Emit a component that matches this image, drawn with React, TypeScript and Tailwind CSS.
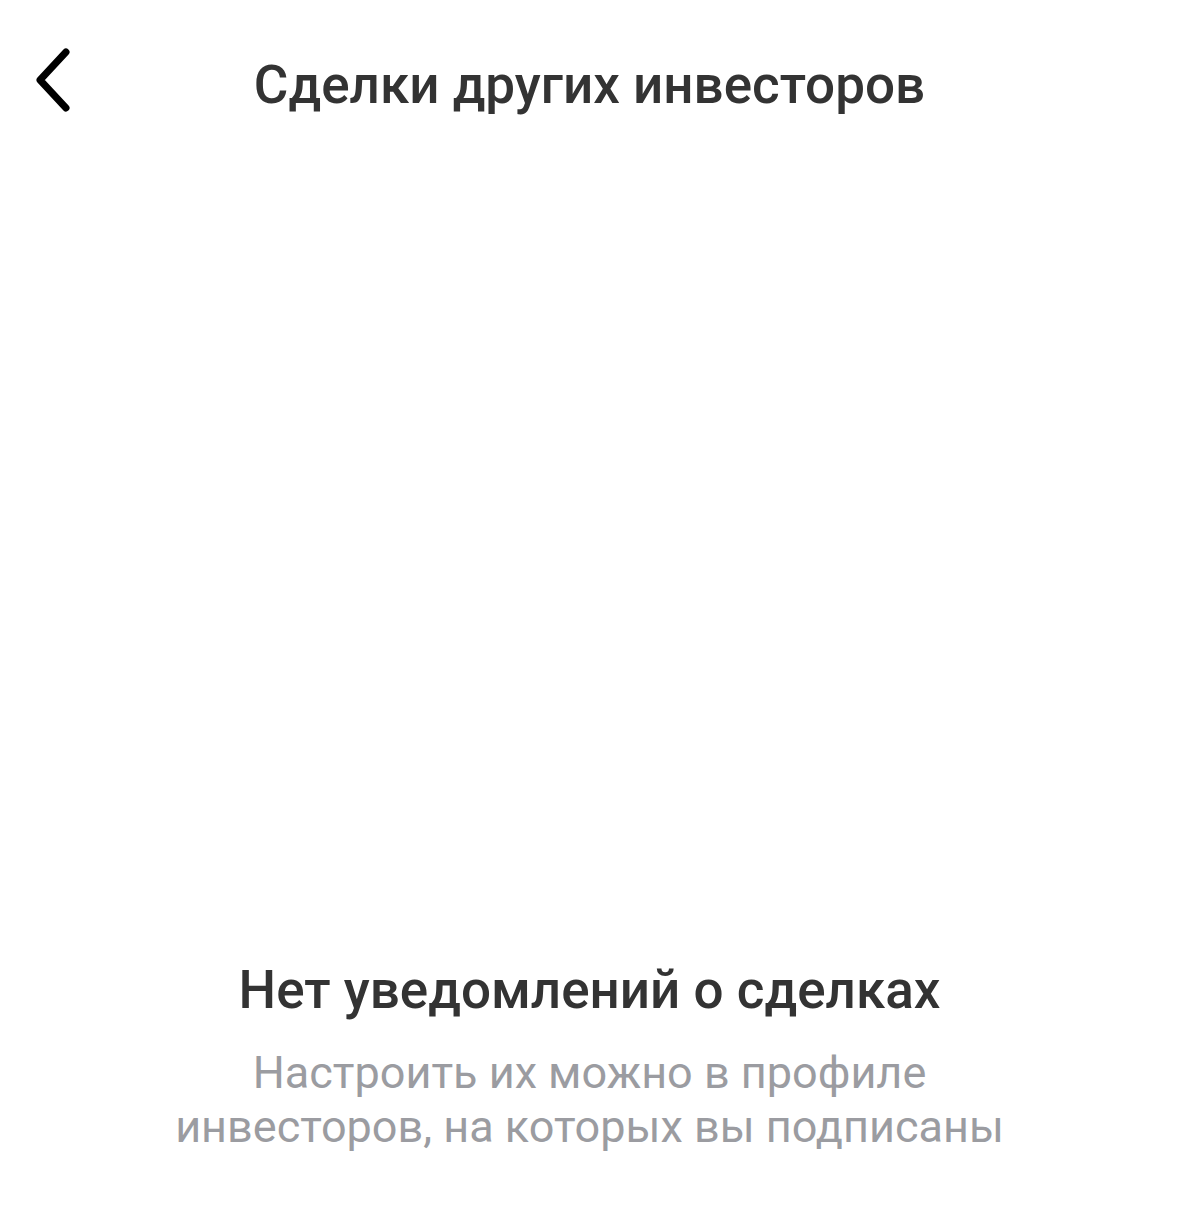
import React from 'react';

const BackIcon = () => (
  <svg width="40" height="64" viewBox="0 0 40 64" fill="none">
    <path d="M33 4 L7 32 L33 60" stroke="#000" strokeWidth="7" strokeLinecap="round" strokeLinejoin="round" />
  </svg>
);

export default function App() {
  return (
    <div className="w-[1179px] h-[1212px] bg-white flex flex-col" style={{ fontFamily: 'Roboto, "Noto Sans", sans-serif' }}>
      <header className="relative h-[170px] flex items-start justify-center pt-[54px]">
        <button className="absolute left-[33px] top-[48px]">
          <BackIcon />
        </button>
        <h1 className="text-[53px] leading-[62px] font-medium text-[#333333]">
          Сделки других инвесторов
        </h1>
      </header>

      <div className="flex-1" />

      <div className="flex flex-col items-center text-center pb-[58px]">
        <h2 className="text-[53px] leading-[62px] font-medium text-[#333333]">
          Нет уведомлений о сделках
        </h2>
        <p className="mt-[25px] text-[45px] leading-[54px] text-[#9b9ca1]">
          Настроить их можно в профиле
          <br />
          инвесторов, на которых вы подписаны
        </p>
      </div>
    </div>
  );
}
